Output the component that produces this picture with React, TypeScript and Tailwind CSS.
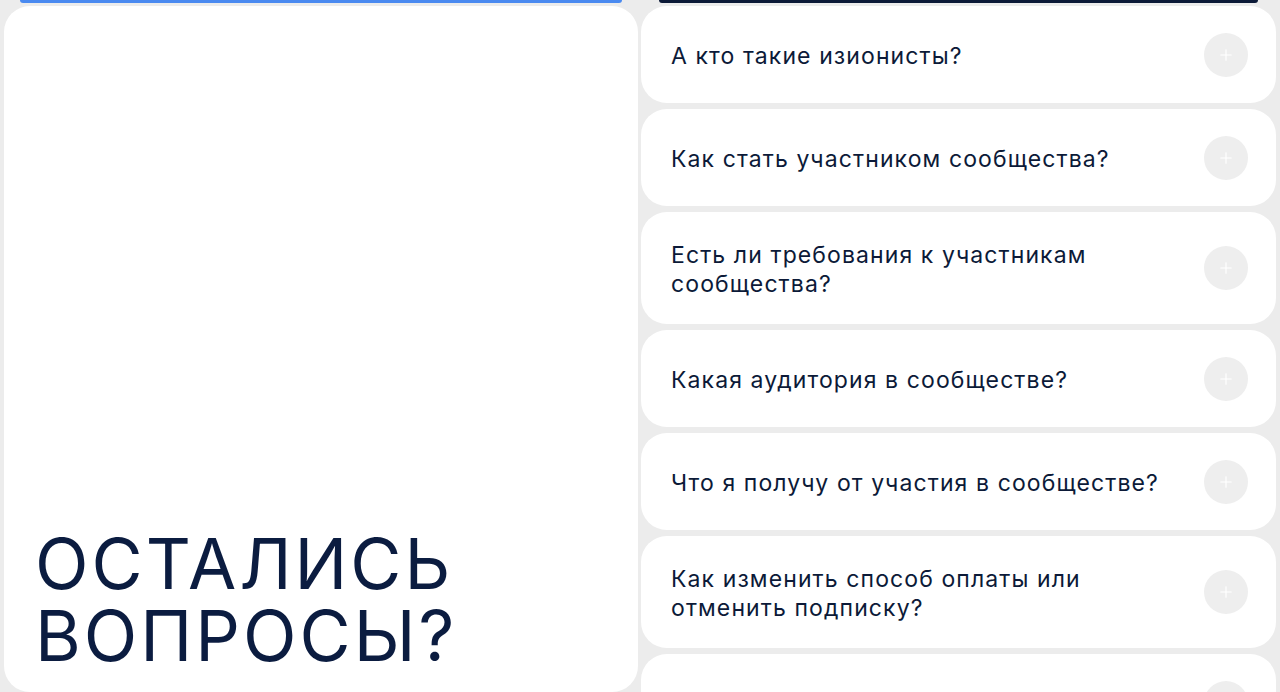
import { Plus } from "lucide-react";

const questions = [
  { text: "А кто такие изионисты?", h: "h-[97px]" },
  { text: "Как стать участником сообщества?", h: "h-[97px]" },
  { text: "Есть ли требования к участникам сообщества?", h: "h-[112px]" },
  { text: "Какая аудитория в сообществе?", h: "h-[97px]" },
  { text: "Что я получу от участия в сообществе?", h: "h-[97px]" },
  { text: "Как изменить способ оплаты или отменить подписку?", h: "h-[112px]" },
  { text: "", h: "h-[97px]" },
];

function FaqItem({ text, h }: { text: string; h: string }) {
  return (
    <div
      className={`${h} shrink-0 rounded-[26px] bg-white flex items-center justify-between pl-[30px] pr-[28px]`}
    >
      <span className="max-w-[505px] pt-[3px] text-[23px] leading-[29px] tracking-[1.1px] text-[#0c1a38]">
        {text}
      </span>
      <span className="w-[44px] h-[44px] rounded-full bg-[#eeeeee] flex items-center justify-center text-white shrink-0">
        <Plus size={18} strokeWidth={1.5} />
      </span>
    </div>
  );
}

export default function App() {
  return (
    <div
      className="h-[692px] overflow-hidden bg-[#ececec] flex gap-[3px] pl-[4px] pr-[4px]"
      style={{ fontFamily: 'Inter, "Liberation Sans", Arial, sans-serif' }}
    >
      {/* left column */}
      <div className="w-[634px] shrink-0 flex flex-col">
        <div className="mx-[16px] h-[3px] shrink-0 rounded-b-[3px] bg-[#4a8af0]" />
        <div className="mt-[3px] flex-1 rounded-[26px] bg-white flex flex-col justify-end pl-[31px] pb-[20px]">
          <h2 className="text-[70px] leading-[72px] tracking-[3px] text-[#0b1c40] font-normal">
            ОСТАЛИСЬ
            <br />
            ВОПРОСЫ?
          </h2>
        </div>
      </div>

      {/* right column */}
      <div className="flex-1 flex flex-col">
        <div className="mx-[18px] h-[3px] shrink-0 rounded-b-[3px] bg-[#0c1a38]" />
        <div className="mt-[3px] flex flex-col gap-[6px]">
          {questions.map((q, i) => (
            <FaqItem key={i} text={q.text} h={q.h} />
          ))}
        </div>
      </div>
    </div>
  );
}
